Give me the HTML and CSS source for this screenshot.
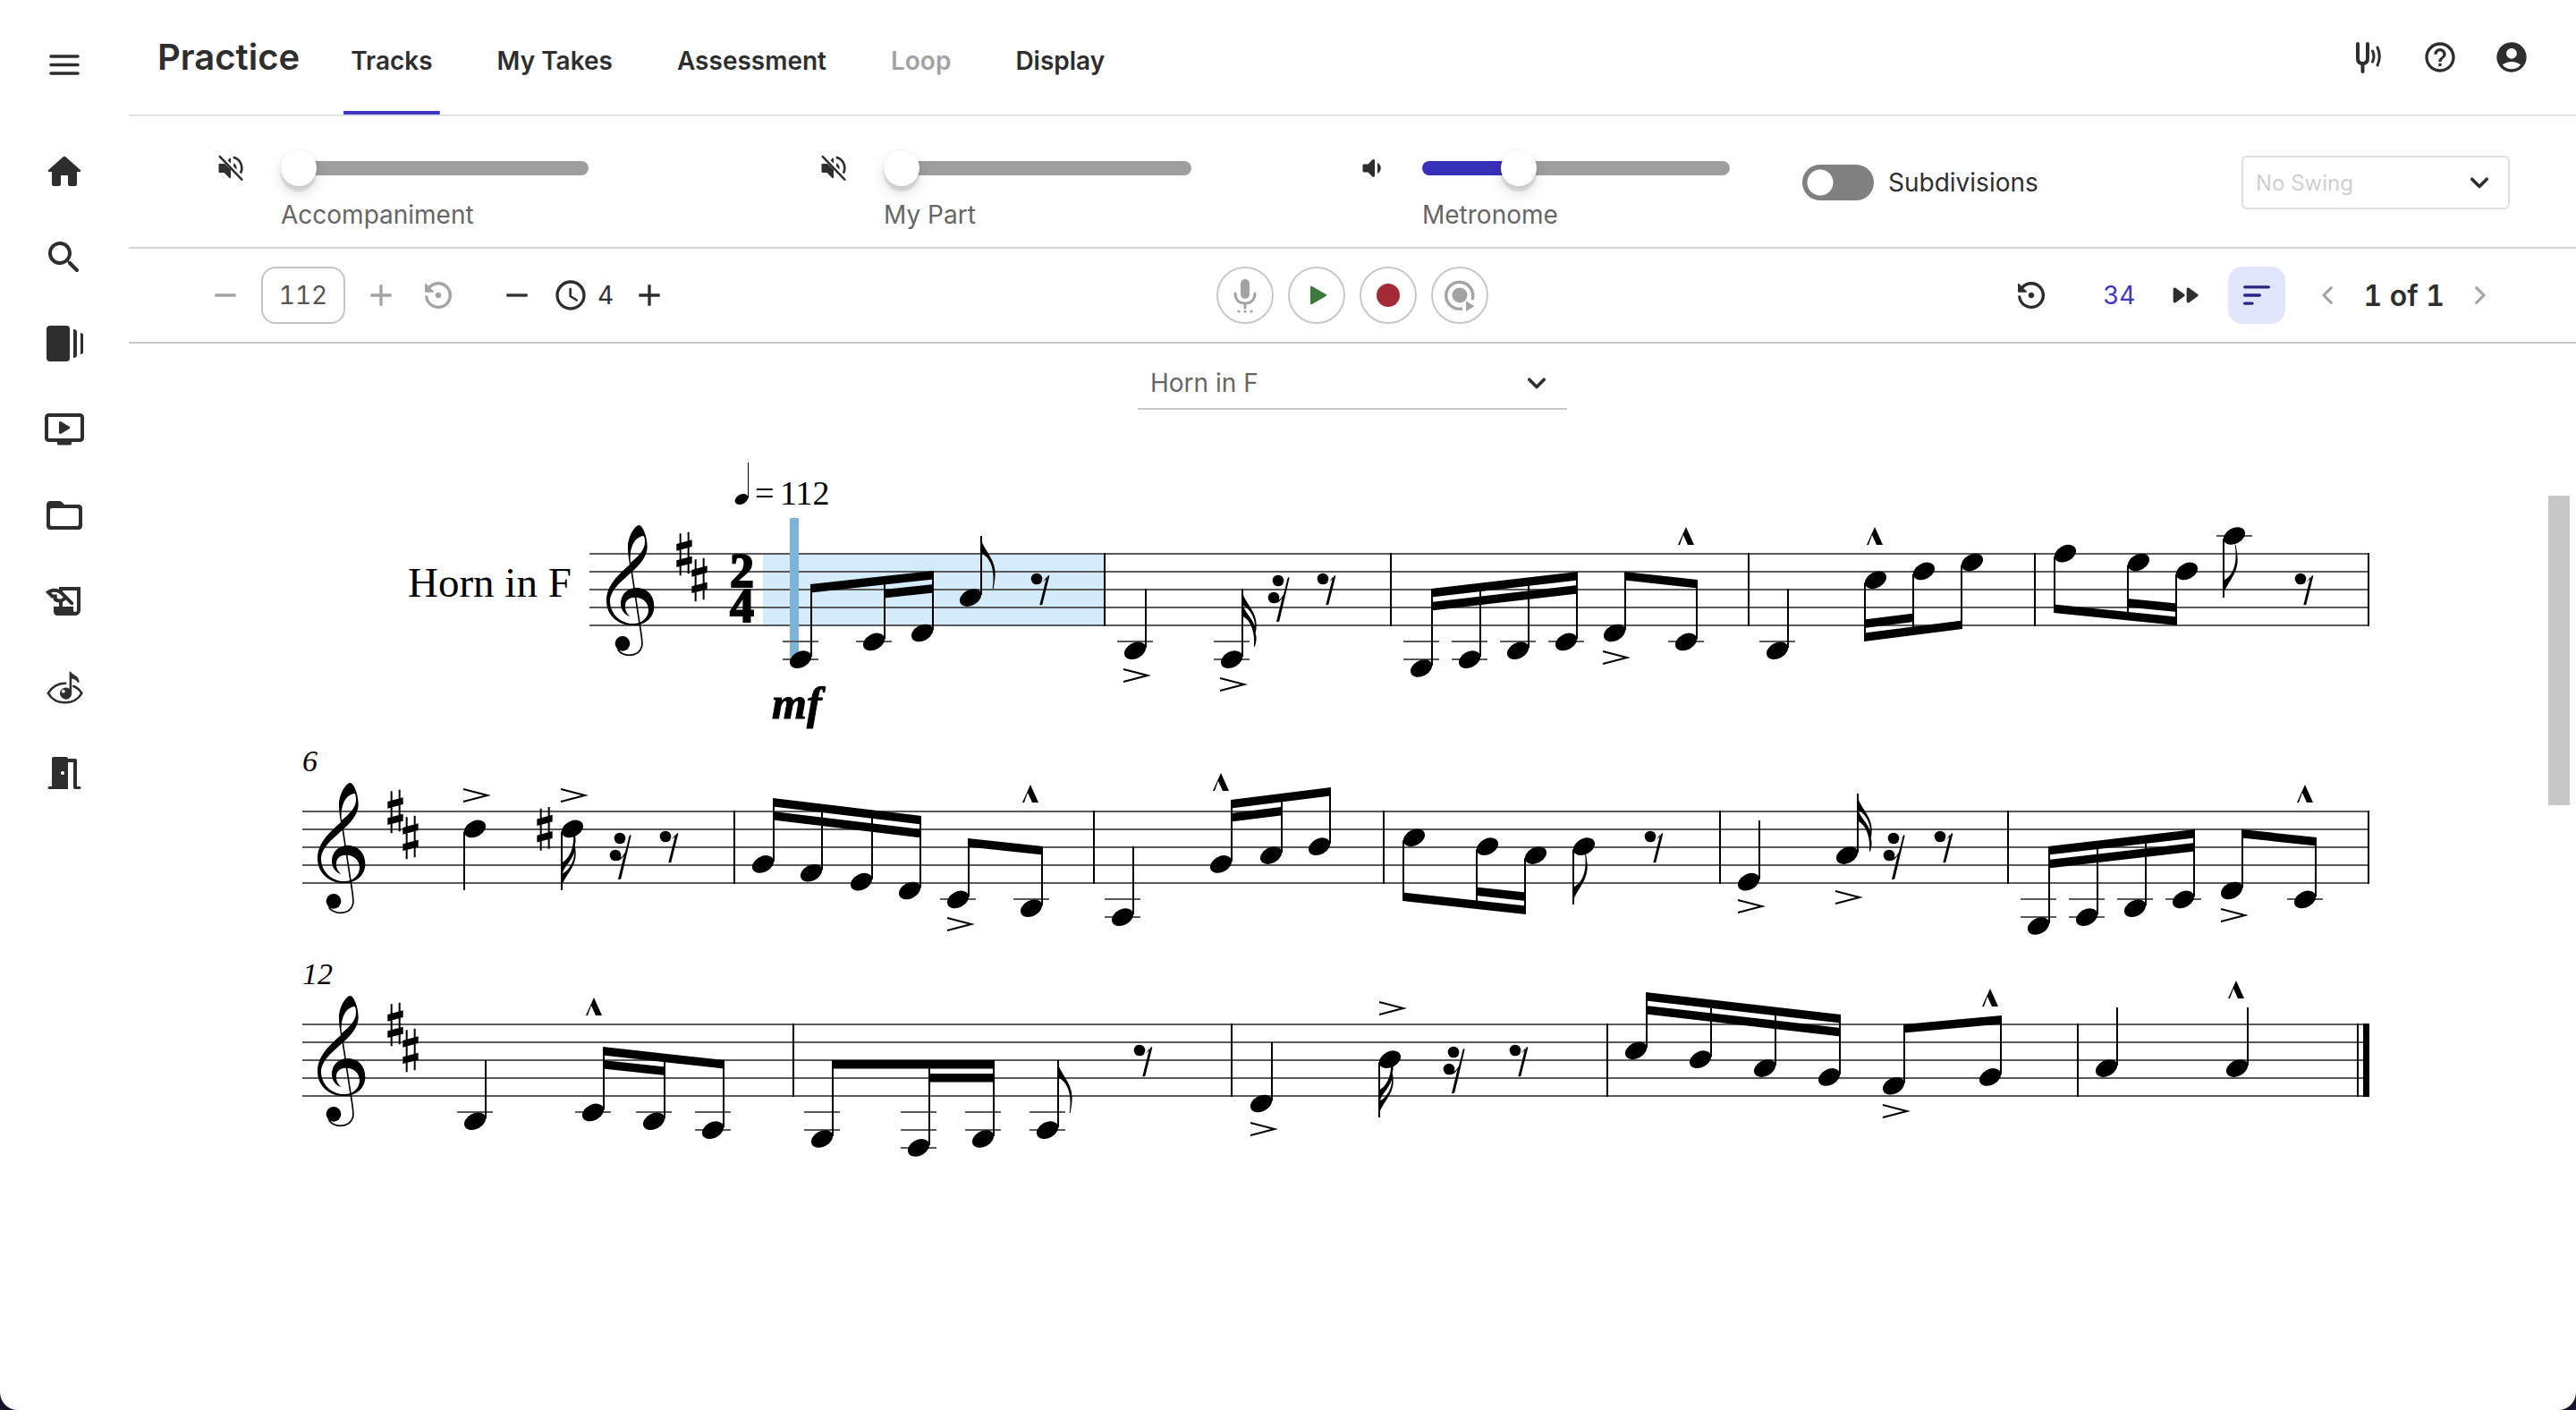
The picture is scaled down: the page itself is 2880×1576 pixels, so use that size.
FILE: index.html
```html
<!doctype html>
<html lang="en">
<head>
    <meta charset="UTF-8">
    <meta name="viewport" content="width=device-width, initial-scale=1.0">
    <title>Practice</title>
    <link rel="stylesheet" href="styles.css">
</head>
<body>
<div class="app">
    <nav class="sidebar" aria-label="Main">
        <button class="icon-btn menu-btn" aria-label="Menu">
            <svg class="icon-lg" viewBox="0 0 48 48"><path d="M9 15h30M9 24.5h30M9 34h30" stroke="currentColor" stroke-width="3.6" fill="none" stroke-linecap="round"/></svg>
        </button>
        <a href="#home" aria-label="Home">
            <svg class="icon-lg" viewBox="0 0 24 24"><path d="M10 19v-5h4v5c0 .55.45 1 1 1h3c.55 0 1-.45 1-1v-7h1.7c.46 0 .68-.57.33-.87L12.67 3.6c-.38-.34-.96-.34-1.34 0l-8.36 7.53c-.34.3-.13.87.33.87H5v7c0 .55.45 1 1 1h3c.55 0 1-.45 1-1z"/></svg>
        </a>
        <a href="#search" aria-label="Search">
            <svg class="icon-lg" viewBox="0 0 24 24"><path d="M15.5 14h-.79l-.28-.27c1.2-1.4 1.82-3.31 1.48-5.34-.47-2.78-2.79-5-5.59-5.34-4.23-.52-7.79 3.04-7.27 7.27.34 2.8 2.56 5.12 5.34 5.59 2.03.34 3.94-.28 5.34-1.48l.27.28v.79l4.25 4.25c.41.41 1.08.41 1.49 0 .41-.41.41-1.08 0-1.49L15.5 14zm-6 0C7.01 14 5 11.99 5 9.5S7.01 5 9.5 5 14 7.01 14 9.5 11.99 14 9.5 14z"/></svg>
        </a>
        <a href="#library" aria-label="Library">
            <svg class="icon-lg" viewBox="0 0 48 48"><rect x="4" y="4" width="26" height="40" rx="4"/><path d="M34 8c2.5 0 4 1 4 3v26c0 2-1.5 3-4 3zM42 12c2 0 3 1 3 2.5v19c0 1.5-1 2.5-3 2.5z"/></svg>
        </a>
        <a href="#videos" aria-label="Videos">
            <svg class="icon-lg" viewBox="0 0 48 48"><rect x="4" y="8" width="40" height="28" rx="2.5" fill="none" stroke="currentColor" stroke-width="4"/><path d="M16 37h16v3c0 .8-.7 1.5-1.5 1.5h-13c-.8 0-1.5-.7-1.5-1.5zM18 16.5c0-1.2 1.2-1.8 2.2-1.2l9.3 5.4c1 .6 1 2 0 2.6l-9.3 5.4c-1 .6-2.2 0-2.2-1.2z"/></svg>
        </a>
        <a href="#folders" aria-label="Folders">
            <svg class="icon-lg" viewBox="0 0 24 24"><path d="M20 6h-8l-1.41-1.41C10.21 4.21 9.7 4 9.17 4H4c-1.1 0-1.99.9-1.99 2L2 18c0 1.1.9 2 2 2h16c1.1 0 2-.9 2-2V8c0-1.1-.9-2-2-2zm-1 12H5c-.55 0-1-.45-1-1V9c0-.55.45-1 1-1h14c.55 0 1 .45 1 1v8c0 .55-.45 1-1 1z"/></svg>
        </a>
        <a href="#compose" aria-label="Compose">
            <svg class="icon-lg" viewBox="0 0 24 24"><path d="M9 4v1.38c-.83-.33-1.72-.5-2.61-.5-1.79 0-3.58.68-4.95 2.05l3.33 3.33h1.11v1.11c.86.86 1.98 1.31 3.11 1.36V15H6v3c0 1.1.9 2 2 2h10c1.66 0 3-1.34 3-3V4H9zm-1.11 6.41V8.26H5.61L4.57 7.22a5.07 5.07 0 0 1 1.82-.34c1.34 0 2.59.52 3.54 1.46l1.41 1.41-.2.2c-.51.51-1.19.8-1.92.8-.47 0-.93-.12-1.33-.34zM19 17c0 .55-.45 1-1 1s-1-.45-1-1v-2h-6v-2.59c.57-.23 1.1-.57 1.56-1.03l.2-.2L15.59 14H17v-1.41l-6-5.97V6h8v11z"/></svg>
        </a>
        <a href="#sight-reading" aria-label="Sight reading">
            <svg class="icon-lg" viewBox="0 0 24 24"><path d="M12.6 9.9C8.5 9.7 4.8 12 2.9 15.4c2 3.4 5.6 5.2 9.4 5.2s7.4-1.8 9.4-5.2c-1-1.7-2.5-3-4.6-3.9" fill="none" stroke="currentColor" stroke-width="1.3" stroke-linecap="round"/><path d="M14.8 3.4h.8c.7 1.9 4.2 1.8 4.7 5.4.1.9-.6.9-.9.4-.8-1.2-2-1.8-3.3-2v8.2a3.3 3.3 0 1 1-1.3-2.5zM11.4 13.4a.9.9 0 1 0 0 1.9.9.9 0 0 0 0-1.9z"/></svg>
        </a>
        <a href="#rooms" aria-label="Rooms">
            <svg class="icon-lg" viewBox="0 0 24 24"><path d="M14 6v15H3.5c-1 0-1-1.5 0-1.5H5V4c0-.6.4-1 1-1h7c.6 0 1 .4 1 1h4c.6 0 1 .4 1 1v14.5h1.5c1 0 1 1.5 0 1.5H18c-.6 0-1-.4-1-1V6zm-3 5a1 1 0 1 0 0 2 1 1 0 0 0 0-2z"/></svg>
        </a>
    </nav>

    <main class="main">
        <header class="topbar">
            <h1 class="title">Practice</h1>
            <div class="tabs" role="tablist">
                <button class="tab active" role="tab" aria-selected="true">Tracks</button>
                <button class="tab" role="tab">My Takes</button>
                <button class="tab" role="tab">Assessment</button>
                <button class="tab" role="tab" disabled>Loop</button>
                <button class="tab" role="tab">Display</button>
            </div>
            <div class="topbar-actions">
                <button class="icon-btn" aria-label="Tuner">
                    <svg class="icon" viewBox="0 0 40 40"><path d="M8 5v16c0 4 2 6 5.5 6s5.5-2 5.5-6V5M13.5 27v9" fill="none" stroke="currentColor" stroke-width="4" stroke-linecap="round"/><path d="M24.5 13c2 4 2 8 0 12M30 9c3 6.500 3 13.500 0 20" fill="none" stroke="currentColor" stroke-width="3" stroke-linecap="round"/></svg>
                </button>
                <button class="icon-btn" aria-label="Help">
                    <svg class="icon" viewBox="0 0 24 24"><path d="M11 18h2v-2h-2v2zm1-16C6.48 2 2 6.48 2 12s4.48 10 10 10 10-4.48 10-10S17.52 2 12 2zm0 18c-4.41 0-8-3.59-8-8s3.59-8 8-8 8 3.59 8 8-3.59 8-8 8zm0-14c-2.21 0-4 1.79-4 4h2c0-1.1.9-2 2-2s2 .9 2 2c0 2-3 1.75-3 5h2c0-2.25 3-2.5 3-5 0-2.21-1.79-4-4-4z"/></svg>
                </button>
                <button class="icon-btn" aria-label="Account">
                    <svg class="icon" viewBox="0 0 24 24"><path d="M12 2C6.48 2 2 6.48 2 12s4.48 10 10 10 10-4.48 10-10S17.52 2 12 2zm0 4c1.93 0 3.5 1.57 3.5 3.5S13.93 13 12 13s-3.5-1.57-3.5-3.5S10.07 6 12 6zm0 14c-2.03 0-4.43-.82-6.14-2.88C7.55 15.8 9.68 15 12 15s4.45.8 6.14 2.12C16.43 19.18 14.03 20 12 20z"/></svg>
                </button>
            </div>
        </header>

        <section class="tracks" aria-label="Tracks">
            <div class="track">
                <button class="icon-btn" aria-label="Unmute accompaniment">
                    <svg class="icon-sm" viewBox="0 0 24 24"><use href="#volume-off"/></svg>
                </button>
                <input class="slider" id="accompaniment" type="range" min="0" max="100" value="0" style="--fill: 0%">
                <label for="accompaniment">Accompaniment</label>
            </div>
            <div class="track">
                <button class="icon-btn" aria-label="Unmute my part">
                    <svg class="icon-sm" viewBox="0 0 24 24"><use href="#volume-off"/></svg>
                </button>
                <input class="slider" id="my-part" type="range" min="0" max="100" value="0" style="--fill: 0%">
                <label for="my-part">My Part</label>
            </div>
            <div class="track">
                <button class="icon-btn" aria-label="Mute metronome">
                    <svg class="icon-sm" viewBox="0 0 24 24"><path d="M5 10v4c0 .55.45 1 1 1h3l3.29 3.29c.63.63 1.71.18 1.71-.71V6.41c0-.89-1.08-1.34-1.71-.71L9 9H6c-.55 0-1 .45-1 1zm13.5 2A4.5 4.5 0 0 0 16 7.97v8.05c1.48-.73 2.5-2.25 2.5-4.02z"/></svg>
                </button>
                <input class="slider" id="metronome" type="range" min="0" max="100" value="29" style="--fill: 29%">
                <label for="metronome">Metronome</label>
            </div>
            <div class="track-options">
                <label class="switch"><input type="checkbox">Subdivisions</label>
                <div class="select swing">
                    <select aria-label="Swing" disabled><option>No Swing</option></select>
                    <svg class="icon-sm" viewBox="0 0 24 24"><use href="#chevron"/></svg>
                </div>
            </div>
        </section>

        <section class="controls" aria-label="Playback">
            <div class="tempo">
                <button class="icon-btn" aria-label="Slower" disabled><svg class="icon" viewBox="0 0 24 24"><path d="M5 11h14v2H5z"/></svg></button>
                <input class="bpm" type="text" value="112" aria-label="Tempo">
                <button class="icon-btn" aria-label="Faster" disabled><svg class="icon" viewBox="0 0 24 24"><use href="#plus"/></svg></button>
                <button class="icon-btn reset" aria-label="Reset tempo" disabled><svg class="icon" viewBox="0 0 24 24"><use href="#restore"/></svg></button>
                <button class="icon-btn" aria-label="Fewer count-in beats"><svg class="icon" viewBox="0 0 24 24"><path d="M5 11h14v2H5z"/></svg></button>
                <span class="count">
                    <svg class="icon" viewBox="0 0 24 24"><path d="M12 2C6.5 2 2 6.5 2 12s4.5 10 10 10 10-4.5 10-10S17.5 2 12 2zm0 18c-4.4 0-8-3.6-8-8s3.6-8 8-8 8 3.6 8 8-3.6 8-8 8zm-.2-13c-.5 0-.8.3-.8.8v4.7c0 .4.2.7.5.9l4.2 2.5c.9.5 1.6-.7.8-1.2l-3.9-2.4V7.8c0-.5-.3-.8-.8-.8z"/></svg>
                    4
                </span>
                <button class="icon-btn" aria-label="More count-in beats"><svg class="icon" viewBox="0 0 24 24"><use href="#plus"/></svg></button>
            </div>
            <div class="transport">
                <button class="round" aria-label="Microphone">
                    <svg class="icon-lg" viewBox="0 0 48 48"><rect x="19" y="6" width="10" height="22" rx="5"/><path d="M13 22c0 7 4.5 11 11 11s11-4 11-11M24 33v5" fill="none" stroke="currentColor" stroke-width="3" stroke-linecap="round"/><circle cx="17" cy="42" r="1.6"/><circle cx="24" cy="42" r="1.6"/><circle cx="31" cy="42" r="1.6"/></svg>
                </button>
                <button class="round play" aria-label="Play">
                    <svg class="icon-lg" viewBox="0 0 48 48"><path d="M17 15c0-1 1-1.6 2-1l15.5 9c.8.5.8 1.5 0 2L19 34c-1 .6-2 0-2-1z"/></svg>
                </button>
                <button class="round record" aria-label="Record">
                    <svg class="icon-lg" viewBox="0 0 48 48"><circle cx="24" cy="24" r="13"/></svg>
                </button>
                <button class="round" aria-label="Playback of take">
                    <svg class="icon-lg" viewBox="0 0 48 48"><circle cx="24" cy="24" r="8.5"/><path d="M27 39A15 15 0 1 1 38 29" fill="none" stroke="currentColor" stroke-width="3.4"/><path d="M31 30.5l9.5 5.8L31 42z"/></svg>
                </button>
            </div>
            <div class="paging">
                <button class="icon-btn" aria-label="Start over"><svg class="icon" viewBox="0 0 24 24"><use href="#restore"/></svg></button>
                <span class="measure">34</span>
                <button class="icon-btn" aria-label="Fast forward"><svg class="icon" viewBox="0 0 24 24"><path d="M5.58 16.89l5.77-4.07c.56-.4.56-1.24 0-1.63L5.58 7.11C4.91 6.65 4 7.12 4 7.93v8.14c0 .81.91 1.28 1.58.82zM13 7.93v8.14c0 .81.91 1.28 1.58.82l5.77-4.07c.56-.4.56-1.24 0-1.63l-5.77-4.07c-.67-.47-1.58 0-1.58.81z"/></svg></button>
                <button class="scroll-mode" aria-label="Scroll mode"><svg class="icon" viewBox="0 0 24 24"><path d="M4 6.5h16M4 12h10M4 17.5h5" stroke="currentColor" stroke-width="2" stroke-linecap="round"/></svg></button>
                <button class="icon-btn" aria-label="Previous page" disabled><svg class="icon" viewBox="0 0 24 24"><path d="M14 7l-5 5 5 5" fill="none" stroke="currentColor" stroke-width="1.8" stroke-linecap="round"/></svg></button>
                <span class="pages">1 of 1</span>
                <button class="icon-btn" aria-label="Next page" disabled><svg class="icon" viewBox="0 0 24 24"><path d="M10 7l5 5-5 5" fill="none" stroke="currentColor" stroke-width="1.8" stroke-linecap="round"/></svg></button>
            </div>
        </section>

        <div class="select part">
            <select aria-label="Part"><option>Horn in F</option></select>
            <svg class="icon-sm" viewBox="0 0 24 24"><use href="#chevron"/></svg>
        </div>

        <section class="sheet" aria-label="Score">
            <svg class="score" id="score" viewBox="144 480 2736 860"></svg>
            <div class="scroll-thumb"></div>
        </section>
    </main>
</div>

<svg class="defs" width="0" height="0" aria-hidden="true">
    <defs>
        <path id="chevron" d="M6.5 9.5L12 15l5.5-5.5" fill="none" stroke="currentColor" stroke-width="2.4" stroke-linecap="round" stroke-linejoin="round"/>
        <path id="plus" d="M11 5h2v6h6v2h-6v6h-2v-6H5v-2h6z"/>
        <path id="volume-off" d="M3 9.3v5.4c0 .3.3.6.6.6H7l4 4c.4.4 1 .1 1-.5v-5.6L7.4 8.7H3.6c-.3 0-.6.3-.6.6zM12 8.5V5.2c0-.6-.6-.9-1-.5L9.7 6.1zM4.5 2.8c-.9-.8-2 .3-1.2 1.2l16.3 17c.8.8 2-.3 1.2-1.2zM14 8.2v2.4l2.3 2.4c.5-2-.5-4.1-2.3-4.8zM14 4.9c3.4.9 5.3 3.7 5.3 7.1 0 1.2-.2 2.2-.7 3.1l1.3 1.3c.8-1.3 1.2-2.8 1.2-4.4 0-4.2-2.7-7.8-6.5-8.8-.9-.2-1.2 1.4-.6 1.7z"/>
        <path id="restore" d="M14 12c0-1.1-.9-2-2-2s-2 .9-2 2 .9 2 2 2 2-.9 2-2zm-2-9a9 9 0 0 0-6.6 2.9L3.7 4.2c-.3-.3-.7-.1-.7.3V9.6c0 .2.2.4.4.4h5.1c.5 0 .7-.5.3-.8L6.8 7.3A7 7 0 1 1 5 12.9c-.1-1.1-1.9-1.1-1.9.1A9 9 0 1 0 12 3z"/>
    </defs>
</svg>
<script src="score.js"></script>
</body>
</html>
```

FILE: styles.css
```css
* {
    box-sizing: border-box;
}

body {
    margin: 0;
    background: #17132b;
    color: #2e2e2e;
    font-family: "Inter", sans-serif;
    font-size: 28px;
}

button, input, select {
    font: inherit;
    color: inherit;
}

button {
    border: 0;
    padding: 0;
    background: none;
    cursor: pointer;
}

svg {
    display: block;
    fill: currentColor;
}

.app {
    display: flex;
    min-height: 100vh;
    background: #fff;
    border-radius: 0 0 20px 20px;
}

.defs {
    position: absolute;
}

.icon-lg { width: 48px; height: 48px; }
.icon { width: 40px; height: 40px; }
.icon-sm { width: 36px; height: 36px; }

.icon-btn:disabled {
    color: #a3a3a3;
}

/* Sidebar */
.sidebar {
    flex: none;
    width: 144px;
    padding-top: 48px;
    display: flex;
    flex-direction: column;
    align-items: center;
    gap: 48px;
}

.sidebar a {
    color: inherit;
}

.menu-btn {
    margin-bottom: 24px;
}

.main {
    flex: 1;
    min-width: 0;
}

/* Top bar */
.topbar {
    display: flex;
    align-items: baseline;
    padding: 0 52px 0 32px;
    border-bottom: 2px solid #e2e2e2;
}

.title {
    margin: 0;
    font-size: 40px;
    font-weight: 600;
    line-height: 44px;
}

.tabs {
    display: flex;
    gap: 56px;
    margin-left: 49px;
}

.tab {
    padding: 46px 8px 34px;
    border-bottom: 4px solid transparent;
    font-weight: 600;
    line-height: 44px;
}

.tab.active {
    border-radius: 4px 4px 0 0;
    background: linear-gradient(#3f37c4, #3f37c4) bottom / 100% 4px no-repeat border-box;
}

.tab:disabled {
    color: #a3a3a3;
}

.topbar-actions {
    display: flex;
    align-self: center;
    gap: 40px;
    margin-left: auto;
}

/* Track volumes */
.tracks {
    display: grid;
    grid-template-columns: 674fr 602fr 499fr 791fr;
    align-items: start;
    padding: 38px 74px 20px 96px;
    border-bottom: 2px solid #d4d4d4;
}

.track {
    display: grid;
    grid-template-columns: 36px 344px;
    align-items: center;
    gap: 16px 38px;
    color: #666;
    line-height: 32px;
}

.track .icon-btn {
    color: #2e2e2e;
}

.track label {
    grid-column: 2;
}

.slider {
    appearance: none;
    width: 100%;
    height: 40px;
    margin: 0;
    background: none;
}

.slider::-webkit-slider-runnable-track {
    height: 16px;
    border-radius: 8px;
    background: linear-gradient(to right, #3730b8 var(--fill), #9e9e9e var(--fill));
}

.slider::-webkit-slider-thumb {
    appearance: none;
    width: 40px;
    height: 40px;
    margin-top: -12px;
    border-radius: 50%;
    background: #fff;
    box-shadow: 0 6px 2px rgba(0, 0, 0, .1), 0 8px 16px rgba(0, 0, 0, .13), 0 0 0 2px rgba(0, 0, 0, .02);
}

.track-options {
    display: flex;
    align-items: center;
    justify-content: space-between;
    height: 72px;
}

.switch {
    display: flex;
    align-items: center;
    gap: 16px;
}

.switch input {
    appearance: none;
    width: 80px;
    height: 40px;
    margin: 0;
    border-radius: 20px;
    background: radial-gradient(circle at 20px 20px, #fff 14px, transparent 15px) #808080;
}

.select {
    position: relative;
}

.select select {
    appearance: none;
    width: 100%;
    padding: 0 14px;
    border: 0;
    background: none;
    opacity: 1;
}

.select svg {
    position: absolute;
    top: 50%;
    right: 16px;
    margin-top: -18px;
    pointer-events: none;
}

.swing {
    width: 300px;
}

.swing select {
    height: 60px;
    border: 2px solid #dfdfdf;
    border-radius: 6px;
    color: #d0d0d0;
    font-size: 24px;
}

/* Playback controls */
.controls {
    display: grid;
    grid-template-columns: 1fr auto 1fr;
    align-items: center;
    padding: 20px 88px;
    border-bottom: 2px solid #c8c8c8;
    font-variant-numeric: tabular-nums;
}

.tempo, .paging, .transport, .count {
    display: flex;
    align-items: center;
}

.tempo {
    gap: 20px;
}

.bpm {
    width: 94px;
    height: 64px;
    padding: 0;
    border: 2px solid #c4c4c4;
    border-radius: 16px;
    color: #555;
    text-align: center;
    font-variant-numeric: tabular-nums;
}

.reset {
    margin: 0 28px 0 4px;
}

.count {
    gap: 10px;
}

.transport {
    gap: 16px;
}

.round {
    display: grid;
    place-items: center;
    width: 64px;
    height: 64px;
    border: 2px solid #c8c8c8;
    border-radius: 50%;
    color: #a3a3a3;
}

.play { color: #3c7a3c; }
.record { color: #a42a38; }

.paging {
    justify-content: flex-end;
    gap: 24px;
}

.measure {
    margin: 0 12px 0 36px;
    color: #3f37c4;
}

.scroll-mode {
    display: grid;
    place-items: center;
    width: 64px;
    height: 64px;
    margin: 0 4px;
    border-radius: 16px;
    background: #e2e6fd;
    color: #2b2480;
}

.pages {
    margin: 0 -5px;
    font-size: 32px;
    font-weight: 600;
}

/* Part picker */
.part {
    width: 480px;
    margin: 14px auto 0;
}

.part select {
    height: 60px;
    padding-top: 2px;
    border-bottom: 2px solid #c8c8c8;
    color: #666;
}

/* Sheet music */
.sheet {
    position: relative;
    margin-top: 22px;
    color: #000;
}

.score {
    width: 100%;
    height: auto;
}

.score text {
    font-family: "Liberation Serif", serif;
}

.part-name { font-size: 47px; }
.tempo-mark { font-size: 38px; }
.bar-number { font-size: 34px; font-style: italic; }

.time-sig {
    font-size: 54px;
    font-weight: 700;
    stroke: #000;
    stroke-width: 2;
}

.dynamic {
    font-size: 50px;
    font-weight: 700;
    font-style: italic;
    stroke: #000;
    stroke-width: 1;
}

.staff-line {
    stroke: #5a5a5a;
    stroke-width: 2;
}

.stem {
    stroke: #000;
    stroke-width: 2;
}

.stem.thin { stroke-width: 1; }

.current-bar { fill: #d3ebfb; }
.cursor { fill: #7fb4da; }

.scroll-thumb {
    position: absolute;
    top: 74px;
    right: 7px;
    width: 24px;
    height: 346px;
    background: #c8c8c8;
}
```

FILE: score.js
```js
const STEP = 9.87;
const HEAD = 12;

// steps count down from the top staff line; x is the centre of the note head
const systems = [
    {
        top: 619, left: 659, clef: 678,
        bars: [1235, 1555, 1955, 2275, 2648],
        beams: [
            { dir: 'up', notes: [[895, 12], [977, 10], [1031, 9]], y: [653, 638], second: [1, 2] },
            { dir: 'up', notes: [[1589, 13], [1643, 12], [1697, 11], [1751, 10]], y: [658, 639], second: [0, 3] },
            { dir: 'up', notes: [[1805, 9], [1885, 10]], y: [639, 648] },
            { dir: 'down', notes: [[2097, 3], [2151, 2], [2205, 1]], y: [717, 703], second: [0, 1] },
            { dir: 'down', notes: [[2309, 0], [2391, 1], [2445, 2]], y: [685, 699], second: [1, 2] }
        ],
        notes: [
            { x: 1085, step: 5, dir: 'up', end: 599, flags: 1 },
            { x: 1269, step: 11, dir: 'up', end: 658 },
            { x: 1377, step: 12, dir: 'up', end: 658, flags: 2 },
            { x: 1987, step: 11, dir: 'up', end: 658 },
            { x: 2498, step: -2, dir: 'down', end: 668, flags: 1 }
        ],
        rests: [[1159, 647, 8], [1429, 649, 16], [1479, 647, 8], [2572, 647, 8]],
        accents: [[1270, 755], [1378, 765], [1806, 735]],
        marcatos: [[1885, 589], [2096, 589]]
    },
    {
        top: 907, left: 338, clef: 355, number: '6',
        bars: [821, 1223, 1547, 1923, 2245, 2648],
        beams: [
            { dir: 'up', notes: [[853, 6], [907, 7], [963, 8], [1017, 9]], y: [892, 912], second: [0, 3] },
            { dir: 'up', notes: [[1071, 10], [1153, 11]], y: [937, 946] },
            { dir: 'up', notes: [[1365, 6], [1421, 5], [1475, 4]], y: [894, 880], second: [0, 1] },
            { dir: 'down', notes: [[1581, 3], [1663, 4], [1717, 5]], y: [1007, 1022], second: [1, 2] },
            { dir: 'up', notes: [[2279, 13], [2333, 12], [2387, 11], [2441, 10]], y: [946, 927], second: [0, 3] },
            { dir: 'up', notes: [[2495, 9], [2577, 10]], y: [927, 936] }
        ],
        notes: [
            { x: 531, step: 2, dir: 'down', end: 995 },
            { x: 640, step: 2, dir: 'down', end: 995, flags: 2, sharp: true },
            { x: 1255, step: 12, dir: 'up', end: 946 },
            { x: 1771, step: 4, dir: 'down', end: 1011, flags: 1 },
            { x: 1955, step: 8, dir: 'up', end: 917 },
            { x: 2065, step: 5, dir: 'up', end: 887, flags: 2 }
        ],
        rests: [[693, 937, 16], [744, 935, 8], [1845, 935, 8], [2117, 937, 16], [2169, 935, 8]],
        accents: [[532, 889], [641, 889], [1073, 1033], [1957, 1013], [2066, 1003], [2497, 1023]],
        marcatos: [[1152, 877], [1365, 864], [2577, 877]]
    },
    {
        top: 1145, left: 338, clef: 355, number: '12', final: true,
        bars: [887, 1377, 1797, 2323],
        beams: [
            { dir: 'up', notes: [[663, 10], [731, 11], [797, 12]], y: [1170, 1185], second: [0, 1] },
            { dir: 'up', notes: [[919, 13], [1027, 14], [1099, 13]], y: [1185, 1185], second: [1, 2] },
            { dir: 'up', notes: [[1829, 3], [1901, 4], [1973, 5], [2045, 6]], y: [1109, 1134], second: [0, 3] },
            { dir: 'up', notes: [[2117, 7], [2225, 6]], y: [1145, 1135] }
        ],
        notes: [
            { x: 531, step: 11, dir: 'up', end: 1185 },
            { x: 1171, step: 12, dir: 'up', end: 1185, flags: 1 },
            { x: 1410, step: 9, dir: 'up', end: 1165 },
            { x: 1554, step: 4, dir: 'down', end: 1249, flags: 2 },
            { x: 2355, step: 5, dir: 'up', end: 1126 },
            { x: 2501, step: 5, dir: 'up', end: 1126 }
        ],
        rests: [[1274, 1174, 8], [1625, 1176, 16], [1694, 1174, 8]],
        accents: [[1412, 1262], [1556, 1127], [2119, 1242]],
        marcatos: [[664, 1115], [2225, 1105], [2500, 1096]]
    }
];

// glyphs are drawn at three times their size
const CLEF = 'M109-96C97-96 72-60 72-22C72 0 75 18 78 36C40 70 0 105 0 158C0 205 38 240 88 240C132 240 160 212 160 176C160 140 136 114 102 114C68 114 48 138 48 166C48 190 62 206 79 210C69 201 61 188 63 172C64 156 78 146 96 146C122 146 141 164 141 188C141 214 118 235 88 234C44 233 12 198 12 158C14 118 56 88 92 55C120 28 137 4 137-24C137-57 122-96 109-96ZM122-60C94-54 76-22 81 30C106 8 129-12 129-40C129-52 127-60 122-60Z';
const FLAG = 'M0 0C6 44 50 72 50 126C50 146 46 162 44 177H41C50 122 38 76 6 60H0Z';
const FLAG2 = 'M0 0C6 44 50 72 50 120C50 132 49 142 47 150C53 166 48 182 45 194H42C47 140 26 104 6 94H0V0ZM6 56C10 78 34 94 45 126C46 96 26 66 6 56Z';
const SHARP = 'M-16-68h6V73h-6zM11-73h6V67h-6zM-26-33L26-47V-24L-26-10ZM-26 22L26 8V32L-26 45Z';
const REST8 = 'M0 18C18 18 28 2 34-8L10 87Q14 89 19 86L43-10L39-12C34-2 27 8 20 10Z';
const REST16 = 'M0 18C18 18 26 2 32-8L18 46C13 56 8 64-2 66L-15 75C0 77 9 66 14 56L-6 137Q-1 139 4 136L38-10L34-12C29-2 24 8 18 10Z';

const out = [];

function glyph(d, x, y, flip = '', rule = 'evenodd') {
    out.push(`<path fill-rule="${rule}" transform="translate(${x} ${y}) scale(.3333 ${flip}.3333)" d="${d}"/>`);
}

function sharp(x, y) {
    glyph(SHARP, x, y, '', 'nonzero');
}

function rest(x, y, kind) {
    glyph(kind === 8 ? REST8 : REST16, x, y, '', 'nonzero');
    out.push(`<circle cx="${x}" cy="${y}" r="6.3"/>`);
    if (kind === 16) {
        out.push(`<circle cx="${x - 5}" cy="${y + 19}" r="6.3"/>`);
    }
}

function line(cls, x1, y1, x2, y2) {
    out.push(`<line class="${cls}" x1="${x1}" y1="${y1}" x2="${x2}" y2="${y2}"/>`);
}

function head(sys, x, step) {
    const y = sys.top - 0.3 + step * STEP;
    for (let s = 10; s <= step; s += 2) {
        const ly = Math.round(sys.top + s * STEP - 0.5);
        line('staff-line', x - 20, ly, x + 20, ly);
    }
    if (step === -2) {
        line('staff-line', x - 20, sys.top - 20, x + 20, sys.top - 20);
    }
    out.push(`<ellipse cx="${x}" cy="${y}" rx="12.8" ry="8.8" transform="rotate(-28 ${x} ${y})"/>`);
    return y;
}

function stemX(x, dir) {
    return dir === 'up' ? x + HEAD : x - HEAD;
}

function drawBeam(sys, group) {
    const sign = group.dir === 'up' ? 1 : -1;
    const xs = group.notes.map(n => stemX(n[0], group.dir));
    const last = xs[xs.length - 1];
    const at = x => group.y[0] + (group.y[1] - group.y[0]) * (x - xs[0]) / (last - xs[0]);
    group.notes.forEach(([x, step], i) => {
        const y = head(sys, x, step);
        line('stem', xs[i], y - sign * 3, xs[i], at(xs[i]) + sign);
    });
    const bar = (a, b, shift) => {
        const p = [[a - 1, at(a)], [b + 1, at(b)], [b + 1, at(b) + sign * 9.5], [a - 1, at(a) + sign * 9.5]];
        out.push(`<polygon points="${p.map(q => q[0] + ',' + (q[1] + sign * shift)).join(' ')}"/>`);
    };
    bar(xs[0], last, 0);
    if (group.second) {
        bar(xs[group.second[0]], xs[group.second[1]], 15);
    }
}

function drawNote(sys, n) {
    const y = head(sys, n.x, n.step);
    const sx = stemX(n.x, n.dir);
    line('stem', sx, n.dir === 'up' ? y - 3 : y + 3, sx, n.end);
    if (n.flags) {
        glyph(n.flags === 2 ? FLAG2 : FLAG, sx - 1, n.end, n.dir === 'down' ? '-' : '');
    }
    if (n.sharp) {
        sharp(n.x - 31, y);
    }
}

function drawSystem(sys) {
    const right = 2649;
    for (let i = 0; i < 5; i++) {
        line('staff-line', sys.left, sys.top + i * 20, right, sys.top + i * 20);
    }
    if (!sys.number) {
        out.push('<rect class="cursor" x="883" y="579" width="10" height="158"/>');
    }
    sys.bars.forEach(x => line('stem', x, sys.top - 1, x, sys.top + 81));
    if (sys.final) {
        line('stem', 2636, sys.top - 1, 2636, sys.top + 81);
        out.push(`<rect x="2642" y="${sys.top - 1}" width="7" height="82"/>`);
    }

    glyph(CLEF, sys.clef, sys.top);
    out.push(`<g transform="translate(${sys.clef} ${sys.top}) scale(.3333)">
        <path d="M80 30L89 88L111 233C118 276 122 296 119 310C114 330 98 340 76 340C60 340 46 332 38 322" fill="none" stroke="#000" stroke-width="5"/>
        <circle cx="54" cy="301" r="25"/></g>`);
    sharp(sys.clef + 87, sys.top);
    sharp(sys.clef + 104, sys.top + 29);
    if (sys.number) {
        out.push(`<text class="bar-number" x="338" y="${sys.top - 45}">${sys.number}</text>`);
    }

    sys.beams.forEach(b => drawBeam(sys, b));
    sys.notes.forEach(n => drawNote(sys, n));
    sys.rests.forEach(([x, y, kind]) => rest(x, y, kind));
    sys.accents.forEach(([x, y]) => {
        out.push(`<path d="M${x - 14} ${y - 7}L${x + 13} ${y}L${x - 14} ${y + 7}" fill="none" stroke="#000" stroke-width="2"/>`);
    });
    sys.marcatos.forEach(([x, y]) => {
        out.push(`<path d="M${x} ${y}L${x + 9} ${y + 20}H${x + 2}L${x - 3} ${y + 9}L${x - 7} ${y + 20}H${x - 9}Z"/>`);
    });
}

out.push('<rect class="current-bar" x="853" y="620" width="381" height="78"/>');
systems.forEach(drawSystem);
out.push(`
    <text class="part-name" x="456" y="667">Horn in F</text>
    <ellipse cx="829" cy="558" rx="7.8" ry="5.3" transform="rotate(-28 829 558)"/>
    <line class="stem thin" x1="836.5" y1="517" x2="836.5" y2="557"/>
    <text class="tempo-mark" x="844" y="564">=</text>
    <text class="tempo-mark" x="872" y="564">112</text>
    <text class="time-sig" x="816" y="656">2</text>
    <text class="time-sig" x="816" y="695">4</text>
    <text class="dynamic" x="863" y="803">mf</text>
`);

document.getElementById('score').innerHTML = out.join('');

document.querySelectorAll('.slider').forEach(slider => {
    slider.addEventListener('input', () => slider.style.setProperty('--fill', slider.value + '%'));
});
```
